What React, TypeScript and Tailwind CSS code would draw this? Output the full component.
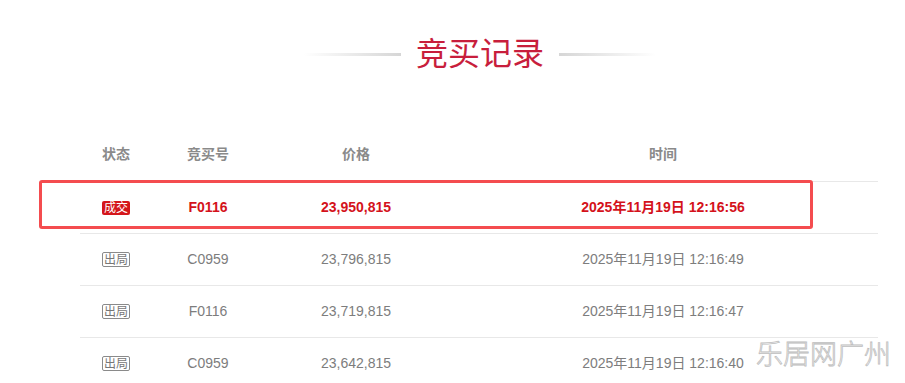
import React from 'react';

type Bid = {
  won: boolean;
  code: string;
  price: string;
  time: string;
};

const bids: Bid[] = [
  { won: true, code: 'F0116', price: '23,950,815', time: '2025年11月19日 12:16:56' },
  { won: false, code: 'C0959', price: '23,796,815', time: '2025年11月19日 12:16:49' },
  { won: false, code: 'F0116', price: '23,719,815', time: '2025年11月19日 12:16:47' },
  { won: false, code: 'C0959', price: '23,642,815', time: '2025年11月19日 12:16:40' },
];

const font = { fontFamily: '"Liberation Sans", Arial, "Noto Sans CJK SC", sans-serif' };

function StatusBadge({ won }: { won: boolean }) {
  if (won) {
    return (
      <span className="inline-flex h-[14px] w-[28px] items-center justify-center rounded-[2px] bg-[#d4171c] text-[12px] font-normal leading-none text-white">
        成交
      </span>
    );
  }
  return (
    <span className="inline-flex h-[15px] w-[28px] items-center justify-center rounded-[2px] border border-[#8a8a8a] text-[12px] leading-none text-[#777]">
      出局
    </span>
  );
}

export default function App() {
  return (
    <div className="relative h-[383px] w-[905px] overflow-hidden bg-white" style={font}>
      <div className="ml-[80px] w-[800px]">
        {/* Title */}
        <div className="flex h-[128px] items-start justify-center pt-[34px]">
          <div className="flex items-center gap-[15px]">
            <div className="h-[3px] w-[97px] bg-gradient-to-r from-white to-[#d6d6d6]" />
            <h1 className="text-[32px] leading-[40px] text-[#c81e3c]">竞买记录</h1>
            <div className="h-[3px] w-[97px] bg-gradient-to-r from-[#d6d6d6] to-white" />
          </div>
        </div>

        {/* Table */}
        <div className="w-[798px]">
          <div className="grid h-[53px] grid-cols-[72px_112px_184px_1fr] items-center text-center text-[14px] font-bold text-[#8a8a8a]">
            <div>状态</div>
            <div>竞买号</div>
            <div>价格</div>
            <div>时间</div>
          </div>
          {bids.map((b, i) => (
            <div
              key={i}
              className={`grid h-[52px] grid-cols-[72px_112px_184px_1fr] items-center border-t border-[#e8e8e8] text-center text-[14px] ${
                b.won ? 'font-bold text-[#d4121b]' : 'text-[#7d7d7d]'
              }`}
            >
              <div className="flex justify-center">
                <StatusBadge won={b.won} />
              </div>
              <div>{b.code}</div>
              <div>{b.price}</div>
              <div>{b.time}</div>
            </div>
          ))}
        </div>
      </div>

      {/* Highlight box */}
      <div className="absolute left-[39px] top-[180px] h-[49px] w-[774px] rounded-[3px] border-[3px] border-[#f44c4f]" />

      {/* Watermark */}
      <div
        className="absolute left-[756px] top-[336px] text-[27px] font-light leading-[34px] text-white [-webkit-text-stroke:0.8px_#bdbdbd]"
        style={{ fontFamily: '"Noto Sans CJK SC", sans-serif' }}
      >
        乐居网广州
      </div>
    </div>
  );
}
